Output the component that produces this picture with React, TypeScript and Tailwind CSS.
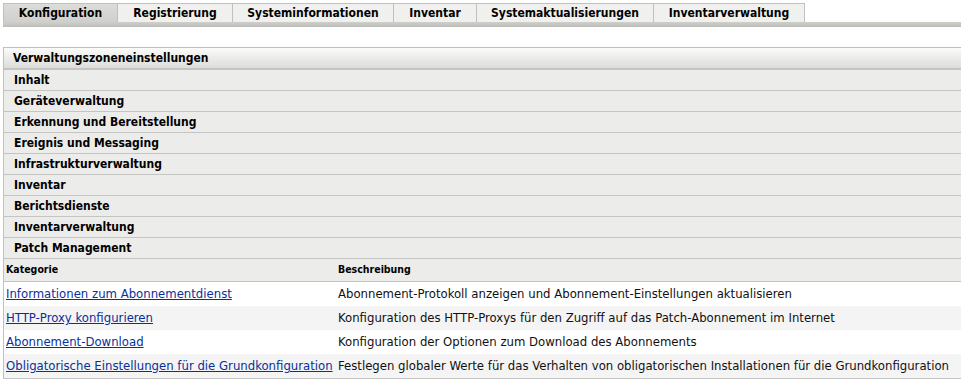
import React from "react";

const tabs = [
  { label: "Konfiguration", w: 114, active: true },
  { label: "Registrierung", w: 115 },
  { label: "Systeminformationen", w: 161 },
  { label: "Inventar", w: 83 },
  { label: "Systemaktualisierungen", w: 177 },
  { label: "Inventarverwaltung", w: 152 },
];

const sections = [
  "Inhalt",
  "Geräteverwaltung",
  "Erkennung und Bereitstellung",
  "Ereignis und Messaging",
  "Infrastrukturverwaltung",
  "Inventar",
  "Berichtsdienste",
  "Inventarverwaltung",
  "Patch Management",
];

const rows = [
  ["Informationen zum Abonnementdienst", "Abonnement-Protokoll anzeigen und Abonnement-Einstellungen aktualisieren"],
  ["HTTP-Proxy konfigurieren", "Konfiguration des HTTP-Proxys für den Zugriff auf das Patch-Abonnement im Internet"],
  ["Abonnement-Download", "Konfiguration der Optionen zum Download des Abonnements"],
  ["Obligatorische Einstellungen für die Grundkonfiguration", "Festlegen globaler Werte für das Verhalten von obligatorischen Installationen für die Grundkonfiguration"],
];

export default function App() {
  return (
    <div className="w-[961px] h-[381px] bg-white overflow-hidden text-black" style={{ fontFamily: '"DejaVu Sans Condensed", "DejaVu Sans", sans-serif' }}>
      {/* tab bar */}
      <div className="pt-[3px] pl-[3px]">
        <div className="flex h-[19px]">
          {tabs.map((t) => (
            <div
              key={t.label}
              style={{ width: t.w }}
              className={
                "flex items-center justify-center border-t border-l border-r-0 border-[#c0c0c0] text-[12px] font-bold leading-none last:border-r " +
                (t.active ? "bg-gradient-to-b from-[#dcdcd8] to-[#cfcfcb]" : "bg-[#f0f0ee]")
              }
            >
              {t.label}
            </div>
          ))}
        </div>
        <div className="h-[5px] bg-gradient-to-b from-[#cfcfcb] to-[#bcbcb8]" />
      </div>

      {/* panel */}
      <div className="mt-[20px] ml-[3px] border-l border-t border-[#c0c0c0]">
        <div className="h-[22px] flex items-center pl-[9px] bg-gradient-to-b from-[#fbfbfa] to-[#dcdcda] border-b-2 border-[#c4c4c2] text-[12px] font-bold">
          Verwaltungszoneneinstellungen
        </div>
        {sections.map((s) => (
          <div key={s} className="h-[21px] flex items-center pl-[10px] bg-[#ececea] border-b border-[#c4c4c2] text-[12px] font-bold">
            {s}
          </div>
        ))}
        <div className="grid grid-cols-[334px_1fr] h-[23px] items-center bg-[#ececea] border-b border-[#c4c4c2] text-[10.5px] font-bold">
          <div className="pl-[2px]">Kategorie</div>
          <div>Beschreibung</div>
        </div>
        {rows.map((r, i) => (
          <div key={r[0]} className={"grid grid-cols-[334px_1fr] h-[24px] items-center text-[13px] " + (i % 2 ? "bg-[#f4f4f4]" : "bg-white")}>
            <div className="pl-[2px] whitespace-nowrap">
              <a href="#" className="text-[#0a2f9c] underline">{r[0]}</a>
            </div>
            <div className="text-[#111] whitespace-nowrap">{r[1]}</div>
          </div>
        ))}
        <div className="h-[1px] bg-[#c4c4c2]" />
      </div>
    </div>
  );
}
